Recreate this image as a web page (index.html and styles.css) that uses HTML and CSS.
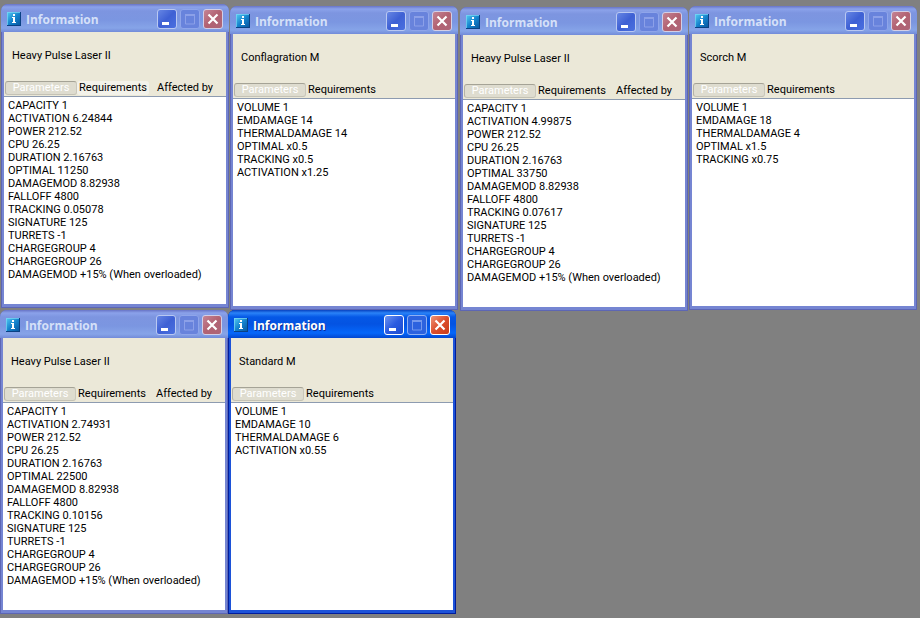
FILE: index.html
```
<!DOCTYPE html>
<html lang="en">
<head>
<meta charset="utf-8">
<title>Information</title>
<link rel="stylesheet" href="styles.css">
</head>
<body>
<svg class="defs" aria-hidden="true">
  <defs>
    <linearGradient id="blue" x1="0" y1="0" x2="1" y2="1"><stop offset="0" stop-color="#55ccf4"/><stop offset=".5" stop-color="#1482cc"/><stop offset="1" stop-color="#06529c"/></linearGradient>
    <symbol id="info" viewBox="0 0 14 14"><rect width="14" height="14" fill="url(#blue)"/><path d="M0 .5h13M.5 0v13" stroke="#7fd9f5" opacity=".7"/><path d="M13.5 0v14M0 13.5h14" stroke="#0a4184"/><path d="M6 2h2v2H6zM5 5h3v5h1v1H5v-1h1V6H5z" fill="#fff"/></symbol>
    <symbol id="min" viewBox="0 0 20 20"><path d="M5 13h7v3H5z" fill="#fff"/></symbol>
    <symbol id="max" viewBox="0 0 20 20"><path d="M5 6h10M5.500 5v10h9V5" fill="none" stroke="currentColor"/><path d="M5 5h10v2H5z" fill="currentColor"/></symbol>
    <symbol id="close" viewBox="0 0 20 20"><path d="M5.500 5.500l9 9M14.500 5.500l-9 9" stroke="#fff" stroke-width="2.200"/></symbol>
  </defs>
</svg>
<main class="desktop" id="desktop"></main>
<script src="windows.js"></script>
</body>
</html>
```
FILE: windows.js
```
const laser = (activation, optimal, tracking) => [
  "CAPACITY 1", "ACTIVATION " + activation, "POWER 212.52", "CPU 26.25",
  "DURATION 2.16763", "OPTIMAL " + optimal, "DAMAGEMOD 8.82938", "FALLOFF 4800",
  "TRACKING " + tracking, "SIGNATURE 125", "TURRETS -1", "CHARGEGROUP 4",
  "CHARGEGROUP 26", "DAMAGEMOD +15% (When overloaded)"
];
const laserTabs = ["Parameters", "Requirements", "Affected by"];
const ammoTabs = ["Parameters", "Requirements"];

const windows = [
  { x: 1, y: 4, item: "Heavy Pulse Laser II", tabs: laserTabs, hover: 1, rows: laser("6.24844", "11250", "0.05078") },
  { x: 230, y: 6, item: "Conflagration M", tabs: ammoTabs, rows: ["VOLUME 1", "EMDAMAGE 14", "THERMALDAMAGE 14", "OPTIMAL x0.5", "TRACKING x0.5", "ACTIVATION x1.25"] },
  { x: 460, y: 7, item: "Heavy Pulse Laser II", tabs: laserTabs, rows: laser("4.99875", "33750", "0.07617") },
  { x: 689, y: 6, item: "Scorch M", tabs: ammoTabs, rows: ["VOLUME 1", "EMDAMAGE 18", "THERMALDAMAGE 4", "OPTIMAL x1.5", "TRACKING x0.75"] },
  { x: 0, y: 310, item: "Heavy Pulse Laser II", tabs: laserTabs, rows: laser("2.74931", "22500", "0.10156") },
  { x: 228, y: 310, active: true, item: "Standard M", tabs: ammoTabs, rows: ["VOLUME 1", "EMDAMAGE 10", "THERMALDAMAGE 6", "ACTIVATION x0.55"] }
];

const control = (name, label, off) =>
  `<button class="control ${name}" aria-label="${label}"${off ? " disabled" : ""}><svg><use href="#${name}"/></svg></button>`;

document.getElementById("desktop").innerHTML = windows.map(w => `
  <section class="window${w.active ? " active" : ""}" style="left:${w.x}px;top:${w.y}px">
    <header class="titlebar">
      <svg class="app-icon" aria-hidden="true"><use href="#info"/></svg>
      <h2 class="title">Information</h2>
      <div class="controls">${control("min", "Minimize")}${control("max", "Maximize", true)}${control("close", "Close")}</div>
    </header>
    <div class="body">
      <p class="item">${w.item}</p>
      <nav class="tabs">${w.tabs.map((t, i) => `<button class="tab${i === 0 ? " selected" : ""}${i === w.hover ? " hover" : ""}">${t}</button>`).join("")}</nav>
      <ul class="list">${w.rows.map(r => `<li>${r}</li>`).join("")}</ul>
    </div>
  </section>`).join("");
```
FILE: styles.css
```
* { box-sizing: border-box; }

body {
  margin: 0;
  background: #808080;
  color: #000;
  font: 11px/13px Roboto, "Liberation Sans", sans-serif;
}

button { font: inherit; padding: 0; border: 0; background: none; }

.defs { position: absolute; width: 0; height: 0; }

.desktop { position: relative; min-height: 100vh; overflow: hidden; }

.window {
  --edge: #5d66b4;
  --frame: #7585d2;
  position: absolute;
  display: flex;
  flex-direction: column;
  width: 228px;
  height: 304px;
  padding: 0 3px 4px;
  border-radius: 7px 7px 0 0;
  background: var(--frame);
  box-shadow: inset -1px -1px var(--edge), inset 1px 0 var(--edge);
}

.titlebar {
  display: flex;
  align-items: center;
  height: 28px;
  margin: 0 -3px;
  padding: 1px 6px 0;
  border-radius: 7px 7px 0 0;
  background: linear-gradient(#6874c6, #8ba2ea 3px, #7d95e0 7px, #7b96e1 16px, #86a4e8 24px, #728bd9);
}

.app-icon { width: 14px; height: 14px; }

.title {
  flex: 1;
  margin: 2px 0 0 5px;
  color: #d5e0f8;
  font: bold 12px/16px "Open Sans", "Noto Sans", sans-serif;
}

.controls { display: flex; gap: 3px; }

.control {
  width: 20px;
  height: 20px;
  border: 1px solid #b9c8f2;
  border-radius: 3px;
  background: linear-gradient(135deg, #6686e4, #3e60d4 50%, #4a70e0);
}

.control svg { display: block; width: 20px; height: 20px; margin: -1px; }
.control.max { border-color: #8fa5ea; background: #6883dc; color: #8ca0e8; }
.control.close { border-color: #d3cfe6; background: linear-gradient(135deg, #c58495, #b26272 50%, #ad6578); }

.active { --edge: #001c9c; --frame: #1c52d8; }
.active .titlebar { background: linear-gradient(#0842c0, #2a83f8 3px, #0558e6 7px, #0453e2 14px, #0567fa 23px, #0347d0); }
.active .title { color: #fff; text-shadow: 1px 1px #0a2f9a; }
.active .control { border-color: #fff; }
.active .control.min { background: linear-gradient(135deg, #6c94f0, #2b5be0 50%, #1c4cd0); }
.active .control.max { border-color: #8fb0f4; background: #2c62df; color: #7398ee; }
.active .control.close { background: linear-gradient(135deg, #ee9478, #dc4e2c 50%, #c83c1a); }

.body {
  display: flex;
  flex: 1;
  flex-direction: column;
  background: #ebe8d8;
}

.item { margin: 0; padding: 17px 8px 18px; }

.tabs { display: flex; height: 16px; padding: 1px 0 1px 1px; }

.tab { width: 72px; height: 14px; line-height: 14px; border-radius: 3px; color: #000; }
.tab.selected { border: 1px solid; border-color: #a5a396 #c9c7bb #c4c2b5 #b4b2a6; background: #dedccf; color: #fff; line-height: 12px; }
.tab.hover { background: #f3f2ea; }

.list {
  flex: 1;
  margin: 0;
  padding: 2px 4px;
  border-top: 1px solid #8d9bb0;
  background: #fff;
  list-style: none;
}
```
